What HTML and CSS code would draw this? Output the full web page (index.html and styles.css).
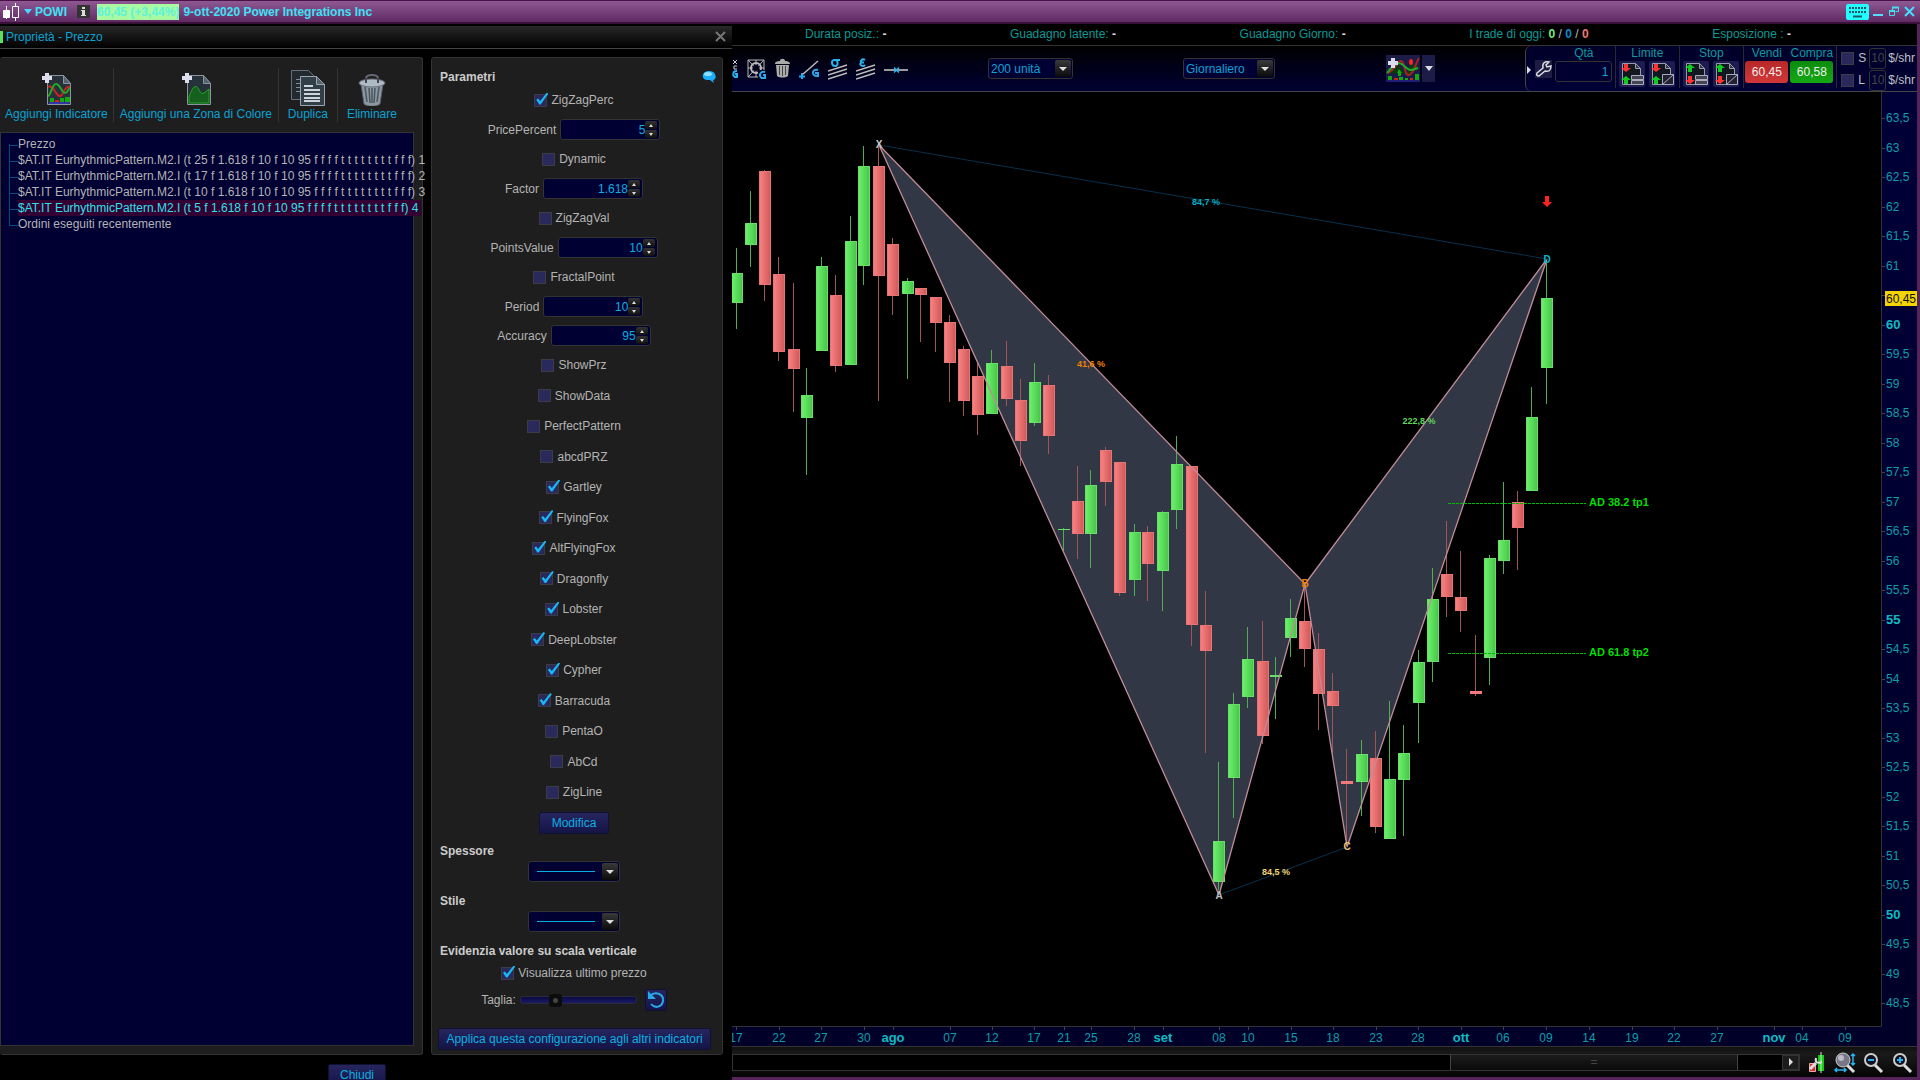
FILE: index.html
```html
<!DOCTYPE html>
<html lang="it">
<head>
<meta charset="utf-8">
<title>POWI</title>
<link rel="stylesheet" href="styles.css">
</head>
<body>
<header class="titlebar">
  <svg class="logo" width="18" height="18" viewBox="0 0 18 18"><g fill="none" stroke="#fff"><path d="M4.500 3v13M13.500 0v3M13.500 15v3"/><path fill="#fff" d="M1.500 7.500h6v7h-6z"/><path d="M10.500 3.500h6v11h-6z"/></g></svg>
  <button class="symbol"><i class="tri tri-cyan"></i>POWI</button>
  <button class="info" aria-label="Info"><svg width="13" height="13" viewBox="0 0 13 13"><rect width="13" height="13" fill="#333"/><path fill="#ddd" d="M5 2h3v2H5zM4 5h4v5h1v1H4v-1h1V6H4z"/></svg></button>
  <span class="quote">60,45 (+3,44%)</span>
  <h1 class="instrument">9-ott-2020 Power Integrations Inc</h1>
  <div class="window-buttons">
    <button aria-label="Tastiera"><svg width="23" height="16" viewBox="0 0 23 16"><rect width="23" height="16" rx="2" fill="#2ff"/><path stroke="#1a5a68" stroke-width="2" stroke-dasharray="2 1" d="M3 4h17M3 8h17"/><path stroke="#1a5a68" stroke-width="2" d="M7 12.500h9"/></svg></button>
    <button aria-label="Riduci"><svg width="11" height="16" viewBox="0 0 11 16"><path stroke="#5df" stroke-width="2" d="M0 11h10"/></svg></button>
    <button aria-label="Ripristina"><svg width="12" height="16" viewBox="0 0 12 16"><g fill="none" stroke="#4de"><path d="M4.500 6V3.500h6v4h-3"/><path stroke-width="2" d="M4 3.500h7M1 7h6"/><path d="M1.500 7h5v4.500h-5z"/></g></svg></button>
    <button aria-label="Chiudi finestra"><svg width="12" height="16" viewBox="0 0 12 16"><path stroke="#4df" stroke-width="2" d="M1 3l9 9M10 3l-9 9"/></svg></button>
  </div>
</header>
<div class="workspace">
  <section class="dialog">
    <div class="dialog-head"><h2>Proprietà - Prezzo</h2><button aria-label="Chiudi pannello"><svg width="12" height="12" viewBox="0 0 12 12"><path stroke="#777" stroke-width="2" d="M1 1l9 9M10 1l-9 9"/></svg></button></div>
    <div class="panels">
      <div class="panel objects">
        <div class="actions">
          <button><svg width="30" height="34" viewBox="0 0 30 34"><path fill="#26313a" stroke="#8a95a0" d="M6.500 3.500h16l7 8v21h-23z"/><path fill="#55626e" stroke="#8a95a0" d="M22.500 3.500v8h7z"/><path fill="none" stroke="#c22" stroke-width="2" d="M7 15c5-3 7 7 11 9s5-11 11-9"/><path fill="none" stroke="#2a2" stroke-width="2" d="M7 24c3-1 4-12 8-12s6 9 9 9 3-4 5-5"/><path fill="#1a1" d="M9 26h4v4H9zM19 26h4v4h-4zM24 25h5v5h-5z"/><path fill="#c22" d="M14 28h4v2h-4z"/><path fill="#33a" d="M8 30h20v2H8z"/><path fill="#dde" d="M4 1h4v3h3v4H8v3H4V8H1V4h3z"/></svg>Aggiungi Indicatore</button>
          <button><svg width="30" height="34" viewBox="0 0 30 34"><path fill="#26313a" stroke="#8a95a0" d="M6.500 3.500h16l7 8v21h-23z"/><path fill="#55626e" stroke="#8a95a0" d="M22.500 3.500v8h7z"/><path fill="#14601c" stroke="#2a2" d="M8 31V25c3-9 6-13 9-9 2 3 3 7 6 5l5-4v14z"/><path fill="#dde" d="M4 1h4v3h3v4H8v3H4V8H1V4h3z"/></svg>Aggiungi una Zona di Colore</button>
          <button><svg width="34" height="36" viewBox="0 0 34 36"><path fill="#222a30" stroke="#66707a" d="M.500.500h17l6 6v23H.500z"/><path stroke="#889" d="M5 9.500h6M5 13.500h6M5 17.500h6M5 21.500h6"/><path fill="#323e48" stroke="#9aa5b0" d="M9.500 6.500h16l8 8v21h-24z"/><path fill="#55626e" stroke="#9aa5b0" d="M25.500 6.500v8h8z"/><path stroke="#cdd3dc" stroke-width="2" d="M13 16h9M13 20h16M13 24h16M13 28h16M13 31h16"/></svg>Duplica</button>
          <button><svg width="28" height="32" viewBox="0 0 28 32"><path fill="none" stroke="#667" stroke-width="2" d="M8 8V4c1-4 11-4 12 0v4"/><path fill="#8c98a2" stroke="#56606a" d="M3 10l3 20c4 3 12 3 16 0l3-20z"/><path stroke="#4a545e" stroke-width="1.500" d="M7 13l2 15M11 14l1 15M14 14v15M17 14l-1 15M21 13l-2 15"/><ellipse cx="14" cy="9" rx="13" ry="4" fill="#aebac4" stroke="#66707a"/><path stroke="#445" stroke-width="2" d="M8 4v5M20 4v5"/></svg>Eliminare</button>
        </div>
        <ul class="tree">
          <li>Prezzo</li>
          <li>$AT.IT EurhythmicPattern.M2.I (t 25 f 1.618 f 10 f 10 95 f f f f t t t t t t t t f f f) 1</li>
          <li>$AT.IT EurhythmicPattern.M2.I (t 17 f 1.618 f 10 f 10 95 f f f f t t t t t t t t f f f) 2</li>
          <li>$AT.IT EurhythmicPattern.M2.I (t 10 f 1.618 f 10 f 10 95 f f f f t t t t t t t t f f f) 3</li>
          <li><span class="selected">$AT.IT EurhythmicPattern.M2.I (t 5 f 1.618 f 10 f 10 95 f f f f t t t t t t t t f f f) 4</span></li>
          <li>Ordini eseguiti recentemente</li>
        </ul>
      </div>
      <form class="panel params">
        <div class="params-head"><h3>Parametri</h3><svg width="14" height="14" viewBox="0 0 14 14"><path fill="#1ab0ff" d="M7 1c8 0 8 9 4 9l1 3-4-3C-2 11-1 1 7 1z"/><ellipse cx="6" cy="4" rx="4" ry="2" fill="#8de0ff"/></svg></div>
        <div class="row check"><input type="checkbox" id="p1" checked><label for="p1">ZigZagPerc</label></div>
        <div class="row spin"><label for="n1">PricePercent</label><span class="spinner"><input id="n1" value="5"><span class="steps"><button type="button" aria-label="Su"><i class="tri up"></i></button><button type="button" aria-label="Giù"><i class="tri"></i></button></span></span></div>
        <div class="row check"><input type="checkbox" id="p2"><label for="p2">Dynamic</label></div>
        <div class="row spin"><label for="n2">Factor</label><span class="spinner"><input id="n2" value="1.618"><span class="steps"><button type="button" aria-label="Su"><i class="tri up"></i></button><button type="button" aria-label="Giù"><i class="tri"></i></button></span></span></div>
        <div class="row check"><input type="checkbox" id="p3"><label for="p3">ZigZagVal</label></div>
        <div class="row spin"><label for="n3">PointsValue</label><span class="spinner"><input id="n3" value="10"><span class="steps"><button type="button" aria-label="Su"><i class="tri up"></i></button><button type="button" aria-label="Giù"><i class="tri"></i></button></span></span></div>
        <div class="row check"><input type="checkbox" id="p4"><label for="p4">FractalPoint</label></div>
        <div class="row spin"><label for="n4">Period</label><span class="spinner"><input id="n4" value="10"><span class="steps"><button type="button" aria-label="Su"><i class="tri up"></i></button><button type="button" aria-label="Giù"><i class="tri"></i></button></span></span></div>
        <div class="row spin"><label for="n5">Accuracy</label><span class="spinner"><input id="n5" value="95"><span class="steps"><button type="button" aria-label="Su"><i class="tri up"></i></button><button type="button" aria-label="Giù"><i class="tri"></i></button></span></span></div>
        <div class="patterns">
          <div class="row check"><input type="checkbox" id="c1"><label for="c1">ShowPrz</label></div>
          <div class="row check"><input type="checkbox" id="c2"><label for="c2">ShowData</label></div>
          <div class="row check"><input type="checkbox" id="c3"><label for="c3">PerfectPattern</label></div>
          <div class="row check"><input type="checkbox" id="c4"><label for="c4">abcdPRZ</label></div>
          <div class="row check"><input type="checkbox" id="c5" checked><label for="c5">Gartley</label></div>
          <div class="row check"><input type="checkbox" id="c6" checked><label for="c6">FlyingFox</label></div>
          <div class="row check"><input type="checkbox" id="c7" checked><label for="c7">AltFlyingFox</label></div>
          <div class="row check"><input type="checkbox" id="c8" checked><label for="c8">Dragonfly</label></div>
          <div class="row check"><input type="checkbox" id="c9" checked><label for="c9">Lobster</label></div>
          <div class="row check"><input type="checkbox" id="c10" checked><label for="c10">DeepLobster</label></div>
          <div class="row check"><input type="checkbox" id="c11" checked><label for="c11">Cypher</label></div>
          <div class="row check"><input type="checkbox" id="c12" checked><label for="c12">Barracuda</label></div>
          <div class="row check"><input type="checkbox" id="c13"><label for="c13">PentaO</label></div>
          <div class="row check"><input type="checkbox" id="c14"><label for="c14">AbCd</label></div>
          <div class="row check"><input type="checkbox" id="c15"><label for="c15">ZigLine</label></div>
        </div>
        <div class="row"><button type="button" class="btn modify">Modifica</button></div>
        <h3><label for="thickness">Spessore</label></h3>
        <div class="row line-row"><span class="combo line"><select id="thickness"><option></option></select></span></div>
        <h3><label for="linestyle">Stile</label></h3>
        <div class="row line-row"><span class="combo line"><select id="linestyle"><option></option></select></span></div>
        <h3>Evidenzia valore su scala verticale</h3>
        <div class="row check last-price"><input type="checkbox" id="lp" checked><label for="lp">Visualizza ultimo prezzo</label></div>
        <div class="row size"><label for="size">Taglia:</label><input type="range" id="size" min="0" max="100" value="28"><button type="button" class="btn reset" aria-label="Ripristina valore"><svg width="20" height="20" viewBox="0 0 20 20"><path fill="none" stroke="#28a8e8" stroke-width="2" d="M4 6c6-6 14-1 13 5-1 6-8 8-12 3"/><path fill="#28a8e8" d="M2 1v8h8z"/></svg></button></div>
        <button type="button" class="btn apply">Applica questa configurazione agli altri indicatori</button>
      </form>
    </div>
    <div class="dialog-foot"><button class="btn close">Chiudi</button></div>
  </section>
  <main class="chart-window">
    <div class="status">
      <span>Durata posiz.: <b>-</b></span><span>Guadagno latente: <b>-</b></span><span>Guadagno Giorno: <b>-</b></span>
      <span>I trade di oggi: <b class="won">0</b> <em>/</em> <b class="even">0</b> <em>/</em> <b class="lost">0</b></span><span>Esposizione : <b>-</b></span>
    </div>
    <div class="toolbar">
      <div class="tools">
        <button aria-label="Griglia"><svg width="6" height="22" viewBox="0 0 6 22"><path fill="none" stroke="#ccc" d="M1 2l4 4M5 2L1 6M5 8H2v3h3"/><path fill="none" stroke="#28b4f0" stroke-width="2" d="M5 13c-5 0-5 7 0 6v-3H3"/></svg></button>
        <button aria-label="Gann"><svg width="19" height="22" viewBox="0 0 19 22"><g fill="none" stroke="#bbb"><path d="M1 2h16v17H1zM1 2l16 17M17 2L1 19M1 10h16M9 2v17"/><circle cx="9" cy="10" r="5" stroke-width="2"/></g><circle cx="9" cy="10" r="3" fill="#000018"/><path d="M11 12h8v10h-8z" fill="#000020"/><path fill="none" stroke="#28a8e8" stroke-width="2" d="M18 14c-6-2-7 7-1 6h1v-3h-2"/></svg></button>
        <button aria-label="Cestino"><svg width="15" height="22" viewBox="0 0 15 22"><path fill="#aaa" d="M0 6c0-3 4-3 5-3 0-3 5-3 5 0 1 0 5 0 5 3zM1 7h13l-1 11c-3 2-8 2-11 0z"/><path stroke="#444" d="M4.500 8v9M7.500 8v10M10.500 8v9"/></svg></button>
        <button aria-label="Linea"><svg width="20" height="22" viewBox="0 0 20 22"><path stroke="#bbb" stroke-width="1.500" d="M3 17L19 3"/><path stroke="#28a8e8" stroke-width="2" d="M0 18.500h6M3 15v6"/><path fill="none" stroke="#28a8e8" stroke-width="2" d="M19 12c-6-2-7 6-1 6h1v-3h-3"/></svg></button>
        <button aria-label="Sigma"><svg width="20" height="22" viewBox="0 0 20 22"><path stroke="#bbb" stroke-width="1.500" d="M0 13l19-6M0 17l19-6M0 21l19-6"/><path fill="none" stroke="#28b4f0" stroke-width="2" d="M12 2H7c-5 0-3 6 0 6 4 0 3-6 0-6"/></svg></button>
        <button aria-label="Epsilon"><svg width="20" height="22" viewBox="0 0 20 22"><path stroke="#bbb" stroke-width="1.500" d="M0 13l19-6M0 17l19-6M0 21l19-6"/><path fill="none" stroke="#28b4f0" stroke-width="2" d="M9 2C6 0 3 4 6 4.500h2H6C2 5 6 10 9 7"/></svg></button>
        <button aria-label="Linea orizzontale"><svg width="24" height="22" viewBox="0 0 24 22"><path stroke="#ccc" stroke-width="1.500" d="M0 12h24"/><path stroke="#28b4f0" stroke-width="1.500" d="M10 9.500l5 5M15 9.500l-5 5"/></svg></button>
      </div>
      <span class="combo units"><select aria-label="Unità"><option>200 unità</option></select></span>
      <span class="combo period"><select aria-label="Periodo"><option>Giornaliero</option></select></span>
      <div class="indicator">
        <button aria-label="Indicatori"><svg width="34" height="26" viewBox="0 0 34 26"><path fill="#0a3a14" d="M1 17c8-13 10-11 15-4 4 8 8 6 17-2L25 6l-4 12z"/><path fill="none" stroke="#a22" stroke-width="2" d="M1 17c8-2 10-12 14-12s3 15 8 14S30 6 33 2"/><path fill="none" stroke="#2a2" stroke-width="2" d="M1 17C8 8 12 5 17 9s5 7 15 3"/><path fill="#1a1" d="M2 20h4v4H2zM13 21h4v3h-4zM19 22h3v2h-3zM29 18h4v6h-4zM13 13l3 4h-1v3h-3v-3h-1z"/><path fill="#c22" d="M8 22h4v2H8zM24 22h3v2h-3z"/><ellipse cx="25" cy="6" rx="2" ry="3" fill="#f22"/><path fill="#dde" d="M5 2h4v3h3v4H9v3H5V9H2V5h3z"/><path stroke="#22a" d="M1 25h32"/></svg></button>
        <button aria-label="Altri indicatori"><i class="tri"></i></button>
      </div>
      <div class="trading">
        <button class="expand" aria-label="Espandi"><i class="tri right"></i></button>
        <button class="wrench" aria-label="Impostazioni"><svg width="17" height="18" viewBox="0 0 17 18"><path fill="none" stroke="#ddd" stroke-width="1.500" d="M2 13l6-5c-1-5 2-7 6-6l-3 3 1 2 4-1c0 5-3 6-6 5l-6 5c-2 0-3-1-2-3z"/></svg></button>
        <div class="field qty"><label for="qty">Qtà</label><input id="qty" value="1"></div>
        <div class="field pair"><span>Limite</span><div class="orders"><button aria-label="Limite orizzontale"><svg width="26" height="26"><use href="#doc"/><use href="#dn"/><use href="#up" y="12"/><use href="#flat"/></svg></button><button aria-label="Limite obliquo"><svg width="26" height="26"><use href="#doc"/><use href="#dn"/><use href="#up" y="12"/><use href="#slope"/></svg></button></div></div>
        <div class="field pair"><span>Stop</span><div class="orders"><button aria-label="Stop orizzontale"><svg width="26" height="26"><use href="#doc"/><use href="#up"/><use href="#dn" y="12"/><use href="#flat"/></svg></button><button aria-label="Stop obliquo"><svg width="26" height="26"><use href="#doc"/><use href="#up"/><use href="#dn" y="12"/><use href="#slope"/></svg></button></div></div>
        <div class="deals"><div class="deal"><span>Vendi</span><button class="sell">60,45</button></div><div class="deal"><span>Compra</span><button class="buy">60,58</button></div></div>
        <div class="protect">
          <div class="protect-row"><input type="checkbox" id="sl"><label for="sl">S</label><input class="amount" aria-label="Stop $/shr" value="10"><span>$/shr</span></div>
          <div class="protect-row"><input type="checkbox" id="tp"><label for="tp">L</label><input class="amount" aria-label="Limite $/shr" value="10"><span>$/shr</span></div>
        </div>
      </div>
    </div>
    <svg class="chart" id="chart" viewBox="732 92 1185 954">
      <defs>
        <linearGradient id="gup"><stop offset="0" stop-color="#6cf26c"/><stop offset="1" stop-color="#48c448"/></linearGradient>
        <linearGradient id="gdn"><stop offset="0" stop-color="#fa8282"/><stop offset="1" stop-color="#cf5858"/></linearGradient>
        <linearGradient id="gax" x1="0" y1="0" x2="0" y2="1"><stop offset="0" stop-color="#000038"/><stop offset="1" stop-color="#000028"/></linearGradient>
        <g id="doc"><path fill="#111820" stroke="#99a" d="M3.500 2.500h13l5 5v16h-18z"/><path fill="#333a44" stroke="#99a" d="M16.500 2.500v5h5z"/></g>
        <path id="dn" fill="#f33" d="M5 3h4v4h3l-5 4-5-4h3z"/>
        <path id="up" fill="#1c2" d="M5 11h4V7h3L7 3 2 7h3z"/>
        <path id="flat" fill="#445" stroke="#aab" d="M12.500 14.500h12v4h-12zM12.500 19.500h12v4h-12z"/>
        <path id="slope" fill="#223" stroke="#aab" d="M13.500 13.500h11v10h-11zM14 23l10-9"/>
      </defs>
    </svg>
    <div class="scroll">
      <div class="track"><div class="thumb">=</div><button aria-label="Avanti"><i class="tri right"></i></button></div>
      <button aria-label="Stile candele"><svg width="20" height="22" viewBox="0 0 20 22"><path fill="#c33" stroke="#eaa" d="M2.500 11.500h6v8h-6z"/><path fill="#1c1" d="M11 3h6v16h-6z"/><path stroke="#ddd" d="M14 0v21"/><path stroke="#ddd" stroke-width="3" d="M3 17l6-6"/><path fill="none" stroke="#ddd" stroke-width="2" d="M9 6c-1 4 1 6 6 4"/></svg></button>
      <button aria-label="Adatta scala"><svg width="22" height="22" viewBox="0 0 22 22"><path stroke="#ddd" stroke-width="3" d="M13 13l7 7"/><circle cx="9" cy="8" r="7" fill="#778" stroke="#ccc"/><circle cx="7" cy="6" r="3" fill="#bbc"/><path fill="none" stroke="#28b4f0" stroke-width="1.500" d="M19 3v9M17 4l2-2 2 2M17 11l2 2 2-2M2 18h9M3 16l-2 2 2 2M10 16l2 2-2 2"/></svg></button>
      <button aria-label="Riduci zoom"><svg width="22" height="22" viewBox="0 0 22 22"><circle cx="8" cy="8" r="6" fill="#112" stroke="#ccc" stroke-width="2"/><path stroke="#ddd" stroke-width="3" d="M12 13l7 7"/><path stroke="#28b4f0" stroke-width="2" d="M5 8h6"/></svg></button>
      <button aria-label="Aumenta zoom"><svg width="22" height="22" viewBox="0 0 22 22"><circle cx="8" cy="8" r="6" fill="#112" stroke="#ccc" stroke-width="2"/><path stroke="#ddd" stroke-width="3" d="M12 13l7 7"/><path stroke="#28b4f0" stroke-width="2" d="M5 8h6M8 5v6"/></svg></button>
    </div>
  </main>
</div>
<script src="chart.js"></script>
</body>
</html>
```
FILE: styles.css
```css
* { box-sizing: border-box; }
body { margin: 0; height: 100vh; overflow: hidden; display: flex; flex-direction: column; background: #000; color: #b4b4b4; font: 12px/16px "Liberation Sans", Arial, sans-serif; }
h1, h2, h3, ul { margin: 0; padding: 0; font-size: 12px; }
button, input, select { margin: 0; padding: 0; border: 0; background: none; color: inherit; font: inherit; }
svg { display: block; flex: none; }
.tri { display: block; width: 0; height: 0; border: 4px solid transparent; border-top: 5px solid #ddd; border-bottom: 0; }
.tri.right { border: 4px solid transparent; border-left-color: #ddd; border-right: 0; }
.tri-cyan { border-top-color: #4df; }

/* title bar */
.titlebar { flex: none; height: 24px; display: flex; align-items: center; padding: 0 4px 0 2px; border-top: 1px solid #4a1048; border-bottom: 2px solid #3a1238; background: linear-gradient(#8e5892, #602a64); color: #3fe2f6; font-weight: bold; }
.symbol { display: flex; align-items: center; gap: 3px; margin-left: 4px; font-weight: bold; }
.info { margin-left: 10px; }
.quote { margin-left: 7px; background: #a9f8a2; color: #5cf4dc; }
.instrument { margin-left: 4px; }
.window-buttons { margin-left: auto; display: flex; gap: 4px; }

.workspace { flex: 1; min-height: 0; display: grid; grid-template-columns: 732px minmax(0, 1fr); }

/* properties dialog */
.dialog { display: flex; flex-direction: column; min-height: 0; padding-top: 2px; }
.dialog-head { flex: none; height: 23px; display: flex; justify-content: space-between; align-items: center; padding: 0 5px 0 0; border-bottom: 1px solid #444; background: linear-gradient(#282828, #000); color: #0ba2d4; }
.dialog-head::before { content: ""; width: 3px; height: 12px; background: #5ce05c; }
.dialog-head h2 { flex: 1; padding-left: 3px; font-weight: normal; }
.panels { flex: 1; min-height: 0; display: flex; gap: 8px; padding: 8px 9px 0 0; }
.panel { display: flex; flex-direction: column; border: 1px solid #333; border-radius: 3px; background: #1e1e1e; }
.objects { width: 423px; padding: 0 8px 8px 0; border-left: 0; }
.params { flex: 1; padding: 10px 6px 4px 6px; }
.actions { flex: none; height: 74px; display: flex; align-items: flex-end; padding-bottom: 10px; }
.actions button { height: 54px; display: flex; flex-direction: column; align-items: center; justify-content: flex-end; padding: 0 5px; color: #0ba2d4; white-space: nowrap; }
.actions button + button { padding: 0 9px; border-left: 1px solid #333; }
.actions button:nth-child(2) { padding: 0 6px; }
.tree { flex: 1; list-style: none; padding: 3px 0 0 8px; border: 1px solid #333; background: #000033; white-space: nowrap; }
.tree li { position: relative; display: flex; height: 16px; padding-left: 9px; }
.tree li::before { content: ""; position: absolute; left: 0; top: 0; width: 9px; height: 9px; border-left: 1px solid #024a80; border-bottom: 1px solid #024a80; }
.tree li + li::after { content: ""; position: absolute; left: 0; top: -8px; height: 9px; border-left: 1px solid #024a80; }
.tree li:first-child::before { border-left: 0; }
.selected { padding-right: 3px; background: #330033; color: #2ee0e8; }
.dialog-foot { flex: none; height: 25px; padding: 9px 0 0 328px; }

/* controls */
.btn { display: block; height: 22px; border: 1px solid #101030; border-radius: 2px; background: linear-gradient(#26265e, #141448); color: #0bb0e0; }
.close { width: 58px; flex: none; }
.params-head { display: flex; justify-content: space-between; align-items: center; height: 17px; }
.params h3 { padding-left: 2px; line-height: 18px; color: #ccc; }
.row { display: flex; align-items: center; justify-content: center; gap: 4px; padding-right: 6px; }
.check { height: 30px; }
.spin { height: 29px; }
input[type="checkbox"] { appearance: none; position: relative; width: 13px; height: 13px; border: 1px solid #3c3c48; background: #29295c; }
input[type="checkbox"]:checked::before { content: ""; position: absolute; left: 0; top: -2px; width: 13px; height: 13px; background: #18b8f8; clip-path: polygon(6% 56%, 20% 46%, 36% 66%, 88% 0, 100% 8%, 40% 92%, 30% 92%); }
.patterns { flex: 1; display: flex; flex-direction: column; justify-content: space-between; padding-bottom: 5px; }
.spinner { display: flex; width: 100px; height: 21px; padding: 1px 2px; border: 1px solid #333; border-radius: 3px; background: #000033; }
.spinner input { flex: 1; min-width: 0; text-align: right; color: #0bb0e0; }
.steps { display: flex; flex-direction: column; justify-content: space-between; width: 12px; }
.steps button { height: 8px; display: grid; place-items: center; border-radius: 2px; background: linear-gradient(#333, #111); }
.steps .tri { border-width: 3px 2px 0 2px; }
.steps .up { border: 2px solid transparent; border-top: 0; border-bottom: 3px solid #ddd; }
.modify { width: 70px; margin-bottom: 8px; }
.combo { position: relative; display: block; height: 21px; border: 1px solid #333; border-radius: 3px; background: #000033; }
.combo select { appearance: none; width: 100%; height: 100%; padding-left: 2px; color: #0ba2d4; }
.combo::after { content: ""; position: absolute; right: 1px; top: 1px; width: 16px; height: 17px; border-radius: 2px; background: linear-gradient(#3a3a3a, #0a0a0a); pointer-events: none; }
.combo::before { content: ""; position: absolute; right: 5px; top: 8px; z-index: 1; border: 4px solid transparent; border-top: 4px solid #ddd; border-bottom: 0; pointer-events: none; }
.line { width: 92px; }
.line select { background: linear-gradient(#0bb0e0, #0bb0e0) no-repeat 8px 9px / 58px 1px; }
.line-row { height: 32px; align-items: flex-start; padding-top: 1px; }
.last-price { height: 26px; }
.size { height: 28px; margin-bottom: 14px; }
.size .btn { display: grid; place-items: center; width: 22px; margin-left: 4px; }
input[type="range"] { appearance: none; width: 117px; height: 14px; }
input[type="range"]::-webkit-slider-runnable-track { height: 8px; border: 1px solid #2a2a3a; border-radius: 3px; background: linear-gradient(#0a0a44, #1a1a66); }
input[type="range"]::-webkit-slider-thumb { appearance: none; width: 13px; height: 13px; margin-top: -3px; border-radius: 3px; background: radial-gradient(#444 2px, #0c0c0c 3px); }
.apply { width: 273px; }

/* chart window */
.chart-window { display: flex; flex-direction: column; min-height: 0; border-right: 3px solid #55245a; border-bottom: 3px solid #55245a; }
.status { flex: none; height: 22px; display: flex; align-items: center; justify-content: space-between; padding: 0 126px 2px 73px; border-bottom: 1px solid #333; color: #0b9a96; }
.status b { color: #ddd; }
.status em { font-style: normal; color: #bbb; }
.status .won { color: #7be87b; }
.status .even { color: #0b88cc; }
.status .lost { color: #f07878; }
.toolbar { flex: none; height: 46px; display: flex; align-items: center; border-bottom: 1px solid #444; background: linear-gradient(#000, #000033); }
.tools { display: flex; gap: 8px; }
.tools button:nth-child(-n+4) { margin-right: 1px; }
.units { width: 85px; margin-left: 80px; }
.period { width: 92px; margin-left: 110px; }
.indicator { display: flex; gap: 2px; margin-left: 111px; }
.indicator button { display: grid; place-items: center; height: 27px; background: #1c1c48; }
.indicator button + button { width: 13px; }
.trading { margin-left: auto; height: 45px; display: flex; align-items: flex-start; padding-right: 2px; border-left: 1px solid #444; border-radius: 6px 0 0 6px; background: linear-gradient(#000028, #000036); color: #0b9a9e; }
.expand { margin: 20px 4px 0 1px; }
.wrench { margin: 14px 0 0 0; background: #1c1c44; }
.field { display: flex; flex-direction: column; align-items: center; }
.qty { margin: 0 3px; }
.qty input { width: 57px; height: 21px; padding-right: 3px; border: 1px solid #333; border-radius: 3px; background: #000030; color: #0ba2d4; text-align: right; }
.field > span, .field > label, .deal > span { line-height: 15px; }
.pair { height: 42px; padding: 0 4px 0 3px; border-left: 1px solid #2a2a30; }
.orders { display: flex; gap: 4px; }
.orders button { background: #1c1c50; border-radius: 2px; }
.deals { display: flex; gap: 2px; height: 42px; padding: 0 3px 0 1px; border: solid #2a2a30; border-width: 0 1px; }
.deal { display: flex; flex-direction: column; align-items: center; width: 43px; }
.deal button { width: 43px; height: 22px; border-radius: 3px; color: #eee; }
.sell { background: linear-gradient(#b82828, #d03838); }
.buy { background: linear-gradient(#0c8c0c, #14a814); }
.protect { display: flex; flex-direction: column; gap: 2px; padding: 2px 0 0 4px; color: #c0c0c0; }
.protect-row { display: flex; align-items: center; height: 20px; }
.protect-row label { width: 15px; padding-left: 4px; }
.amount { width: 17px; height: 21px; border: 1px solid #333; border-radius: 3px; color: #444; text-align: center; }
.protect-row span { padding-left: 2px; }

.chart { flex: 1; min-height: 0; width: 100%; background: #000; }
.chart text { font-size: 12px; fill: #0b9fa8; }
.chart .major { font-size: 13px; font-weight: bold; fill: #0bbcc4; }
.chart .ratio { font-size: 9px; font-weight: bold; text-anchor: middle; }
.chart .point { font-size: 10px; font-weight: bold; text-anchor: middle; }
.chart .target { font-size: 11px; font-weight: bold; fill: #0d0; }
.chart .tag { fill: #111; }
.scroll { flex: none; height: 31px; display: flex; align-items: center; gap: 7px; padding-right: 3px; border-top: 1px solid #333; background: linear-gradient(#111, #1a1a1a 7px, #050505); }
.scroll svg { margin-top: 1px; }
.track { flex: 1; display: flex; justify-content: flex-end; height: 17px; border: 1px solid #333; background: #000; }
.thumb { width: 27%; margin-right: 44px; border: solid #444; border-width: 0 1px; background: linear-gradient(#1c1c1c, #0a0a0a); color: #444; line-height: 15px; text-align: center; }
.track button { width: 17px; display: grid; place-items: center; background: #1c1c1c; border: 1px solid #333; }
```
FILE: chart.js
```javascript
// Candles: [x, high, bodyTop, bodyBottom, low, up]
const candles = [
[737,248,273,303,329,1],[751,191,223,245,267,1],[765,170,171,285,301,0],[779,257,274,352,361,0],[794,283,349,369,412,0],
[807,368,395,418,475,1],[822,257,266,351,351,1],[836,275,295,366,372,0],[851,216,241,365,365,1],[864,146,166,266,285,1],
[879,146,166,276,401,0],[893,238,244,296,315,0],[908,278,281,294,379,1],[921,288,288,295,342,0],[936,297,297,323,352,0],
[950,315,322,363,402,0],[964,346,349,401,416,0],[978,363,376,415,435,0],[992,350,363,414,414,1],[1007,341,366,399,406,0],
[1021,379,400,441,466,0],[1035,363,382,423,426,1],[1049,375,385,436,454,0],[1064,528,529,530,551,1],[1078,466,501,534,559,0],
[1091,470,485,534,568,1],[1106,447,450,482,506,0],[1120,462,462,593,596,0],[1135,524,532,580,596,1],[1148,526,532,564,601,0],
[1163,511,512,571,611,1],[1177,436,464,510,529,1],[1192,466,466,625,646,0],[1206,591,625,651,753,0],[1219,762,841,882,890,1],
[1234,693,704,778,818,1],[1248,627,659,697,708,1],[1263,621,661,736,744,0],[1276,657,675,677,719,1],[1291,599,618,638,657,1],
[1305,583,621,649,667,0],[1319,633,649,694,730,0],[1333,673,691,706,753,0],[1347,749,781,784,845,0],[1362,740,754,782,816,1],
[1376,731,758,827,833,0],[1390,701,779,839,839,1],[1404,725,753,780,836,1],[1419,650,662,703,743,1],[1433,568,599,662,682,1],
[1447,521,574,597,617,0],[1461,551,597,611,632,0],[1476,635,691,694,696,0],[1490,555,558,658,685,1],[1504,482,540,561,574,1],
[1518,491,502,528,570,0],[1532,387,417,491,491,1],[1547,260,298,368,404,1]];
const dates = [["17",736],["22",779],["27",821],["30",864],["ago",893],["07",950],["12",992],["17",1034],["21",1064],["25",1091],["28",1134],["set",1163],["08",1219],["10",1248],["15",1291],["18",1333],["23",1376],["28",1418],["ott",1461],["06",1503],["09",1546],["14",1589],["19",1632],["22",1674],["27",1717],["nov",1774],["04",1802],["09",1845]];

let out = '<path fill="#323746" d="M879 145L1219 895 1305 584zM1305 584L1347 847 1547 259z"/>';
for (const [x, high, top, bottom, low, up] of candles) {
  out += `<path stroke="${up ? '#4fae4f' : '#a05656'}" d="M${x - 1}.500 ${high}V${low}"/>`;
  const h = Math.max(1, bottom - top);
  out += h > 4
    ? `<rect x="${x - 6}.500" y="${top}.500" width="11" height="${h - 1}" fill="url(#${up ? 'gup' : 'gdn'})" stroke="${up ? '#66e066' : '#e87474'}"/>`
    : `<rect x="${x - 6}" y="${top}" width="12" height="${h}" fill="${up ? '#66e066' : '#f07a7a'}"/>`;
}
out += '<path fill="none" stroke="#c08c98" stroke-width="1.300" stroke-linejoin="bevel" d="M879 145L1219 895 1305 584zM1305 584L1347 847 1547 259z"/>'
  + '<path fill="none" stroke="#06304c" d="M879 145L1547 259M1219 895L1347 847"/>'
  + '<path stroke="#0b0" d="M1448 503.500H1586M1448 653.500H1586" stroke-dasharray="3 1"/>'
  + '<path fill="#f22" d="M1545 196h4v6h3l-5 5-5-5h3z"/>';
for (const [t, x, y, c] of [["X",879,148,"#ccc"],["A",1219,899,"#bbb"],["B",1305,587,"#f08000"],["C",1347,850,"#e8c070"],["D",1547,263,"#00b8c8"],["84,7 %",1206,205,"#00b0c8"],["41,6 %",1091,367,"#f08000"],["222,8 %",1419,424,"#5cd85c"],["84,5 %",1276,875,"#f0d070"]])
  out += `<text class="${t.length > 1 ? 'ratio' : 'point'}" x="${x}" y="${y}" style="fill:${c}">${t}</text>`;
out += '<text class="target" x="1589" y="506">AD 38.2 tp1</text><text class="target" x="1589" y="656">AD 61.8 tp2</text>';

// Axes
out += '<path fill="url(#gax)" d="M1882 92h35v954H732v-19h1150z"/><path fill="none" stroke="#333" d="M1881.500 92v934.500H732"/>';
for (let i = 0; i <= 30; i++) {
  const price = 63.5 - i / 2, y = Math.round(118 + i * 29.5);
  out += `<path stroke="#444" d="M1882 ${y}.500h3"/>`;
  // the last-price tag takes the place of this label
  if (price !== 60.5) out += `<text class="${price % 5 ? '' : 'major'}" x="1886" y="${y + 4}">${String(price).replace('.', ',')}</text>`;
}
out += '<path fill="#f4d400" d="M1885 291h32v15h-32z"/><text class="tag" x="1886" y="303">60,45</text>';
for (const [t, x] of dates)
  out += `<path stroke="#444" d="M${x}.500 1027v3"/><text class="${isNaN(t) ? 'major' : ''}" x="${x}" y="1042" text-anchor="middle">${t}</text>`;
document.getElementById('chart').insertAdjacentHTML('beforeend', out);
```
